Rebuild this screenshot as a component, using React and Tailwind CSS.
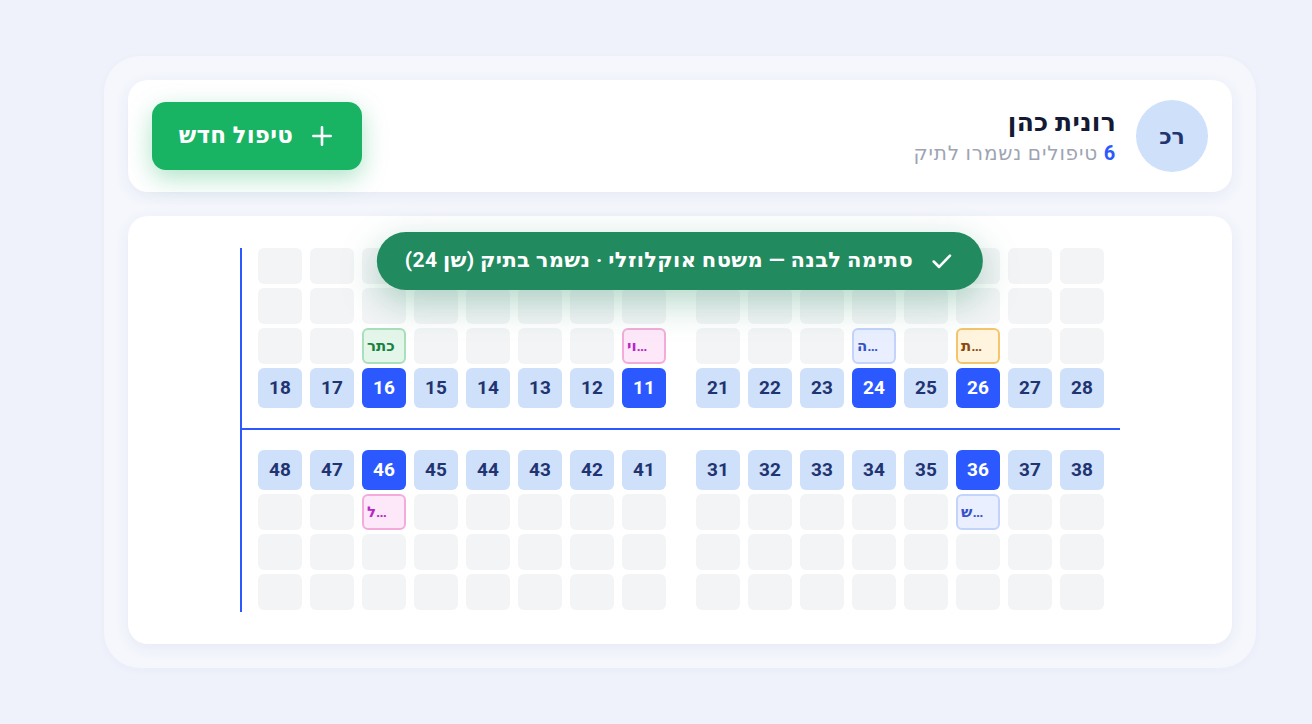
import React from "react";

const upperLeft = [18, 17, 16, 15, 14, 13, 12, 11];
const upperRight = [21, 22, 23, 24, 25, 26, 27, 28];
const lowerLeft = [48, 47, 46, 45, 44, 43, 42, 41];
const lowerRight = [31, 32, 33, 34, 35, 36, 37, 38];
const selected = new Set([16, 11, 24, 26, 46, 36]);

const tone = {
  green: "bg-[#e4f6ea] border-[#a9dfbb] text-[#18833f]",
  pink: "bg-[#fde8f9] border-[#f3acd9] text-[#b826c4]",
  blue: "bg-[#e9effe] border-[#c3d3fb] text-[#3552c8]",
  orange: "bg-[#fff4dd] border-[#f5c46c] text-[#8a4a10]",
};

const labels = {
  16: { t: "כתר", c: "green" },
  11: { t: "וי…", c: "pink" },
  24: { t: "ה…", c: "blue" },
  26: { t: "ת…", c: "orange" },
  46: { t: "ל…", c: "pink" },
  36: { t: "ש…", c: "blue" },
};

function Empty() {
  return <div className="h-9 w-11 rounded-md bg-[#f3f4f6]" />;
}

function Label({ n }) {
  const l = labels[n];
  if (!l) return <Empty />;
  return (
    <div
      dir="ltr"
      className={`flex h-9 w-11 items-center overflow-hidden whitespace-nowrap rounded-md border-2 px-[3px] text-[15px] font-semibold ${tone[l.c]}`}
    >
      {l.t}
    </div>
  );
}

function Num({ n }) {
  const sel = selected.has(n);
  return (
    <div
      className={`flex h-10 w-11 items-center justify-center rounded-md text-[19px] font-bold ${
        sel ? "bg-[#2b59ff] text-white" : "bg-[#cfe0fb] text-[#1f3470]"
      }`}
    >
      {n}
    </div>
  );
}

function UpperCol({ n }) {
  return (
    <div className="flex flex-col gap-1">
      <Empty />
      <Empty />
      <Label n={n} />
      <Num n={n} />
    </div>
  );
}

function LowerCol({ n }) {
  return (
    <div className="flex flex-col gap-1">
      <Num n={n} />
      <Label n={n} />
      <Empty />
      <Empty />
    </div>
  );
}

function Half({ list, Col }) {
  return (
    <div className="flex gap-2">
      {list.map((n) => (
        <Col key={n} n={n} />
      ))}
    </div>
  );
}

export default function App() {
  return (
    <div
      dir="rtl"
      className="min-h-[724px] w-full bg-[#eff2fb] pt-[56px] font-['Roboto','DejaVu_Sans',sans-serif]"
    >
      <div className="mr-[56px] flex w-[1152px] flex-col gap-6 rounded-[36px] bg-[#f5f7fd] p-6 shadow-[0_2px_10px_rgba(30,50,120,0.03)]">
        {/* header */}
        <div className="flex h-[112px] items-center justify-between rounded-[20px] bg-white px-6 shadow-[0_4px_16px_rgba(30,50,120,0.07)]">
          <div className="flex items-center gap-5">
            <div className="flex h-[72px] w-[72px] items-center justify-center rounded-full bg-[#cfe0fb] text-[22px] font-bold text-[#1f3470]">
              רכ
            </div>
            <div className="flex flex-col gap-[2px]">
              <div className="text-[25px] font-bold leading-8 tracking-[0.3px] text-[#141a33]">רונית כהן</div>
              <div className="text-[20px] leading-6 tracking-[0.8px] text-[#9ea4b2]">
                <span className="font-bold text-[#2b59ff]">6</span> טיפולים נשמרו לתיק
              </div>
            </div>
          </div>
          <button className="flex h-[68px] w-[210px] items-center justify-center gap-4 rounded-[14px] bg-[#19b364] text-[23px] font-bold tracking-[0.3px] text-white shadow-[0_8px_24px_rgba(25,179,100,0.35)]">
            <svg width="26" height="26" viewBox="0 0 24 24" fill="none" stroke="currentColor" strokeWidth="2.4" strokeLinecap="round">
              <path d="M12 4v16M4 12h16" />
            </svg>
            <span>טיפול חדש</span>
          </button>
        </div>

        {/* chart */}
        <div className="relative flex h-[428px] justify-center rounded-[20px] bg-white py-8 shadow-[0_4px_16px_rgba(30,50,120,0.07)]">
          <div dir="ltr" className="flex w-[880px] flex-col border-l-2 border-[#2b59ff]">
            <div className="flex gap-[30px] pl-4">
              <Half list={upperLeft} Col={UpperCol} />
              <Half list={upperRight} Col={UpperCol} />
            </div>
            <div className="my-5 h-[2px] bg-[#2b59ff]" />
            <div className="flex gap-[30px] pl-4">
              <Half list={lowerLeft} Col={LowerCol} />
              <Half list={lowerRight} Col={LowerCol} />
            </div>
          </div>

          <div className="absolute left-1/2 top-4 flex h-[58px] -translate-x-1/2 items-center gap-[16px] whitespace-nowrap rounded-full bg-[#218a5f] px-7 text-[21px] font-bold tracking-[0.35px] text-white shadow-[0_12px_36px_rgba(33,138,95,0.35)]">
            <svg width="26" height="26" viewBox="0 0 24 24" fill="none" stroke="currentColor" strokeWidth="2.4" strokeLinecap="round" strokeLinejoin="round">
              <path d="M4.5 12.5l5 5L19.5 7" />
            </svg>
            <span>סתימה לבנה — משטח אוקלוזלי · נשמר בתיק (שן 24)</span>
          </div>
        </div>
      </div>
    </div>
  );
}
